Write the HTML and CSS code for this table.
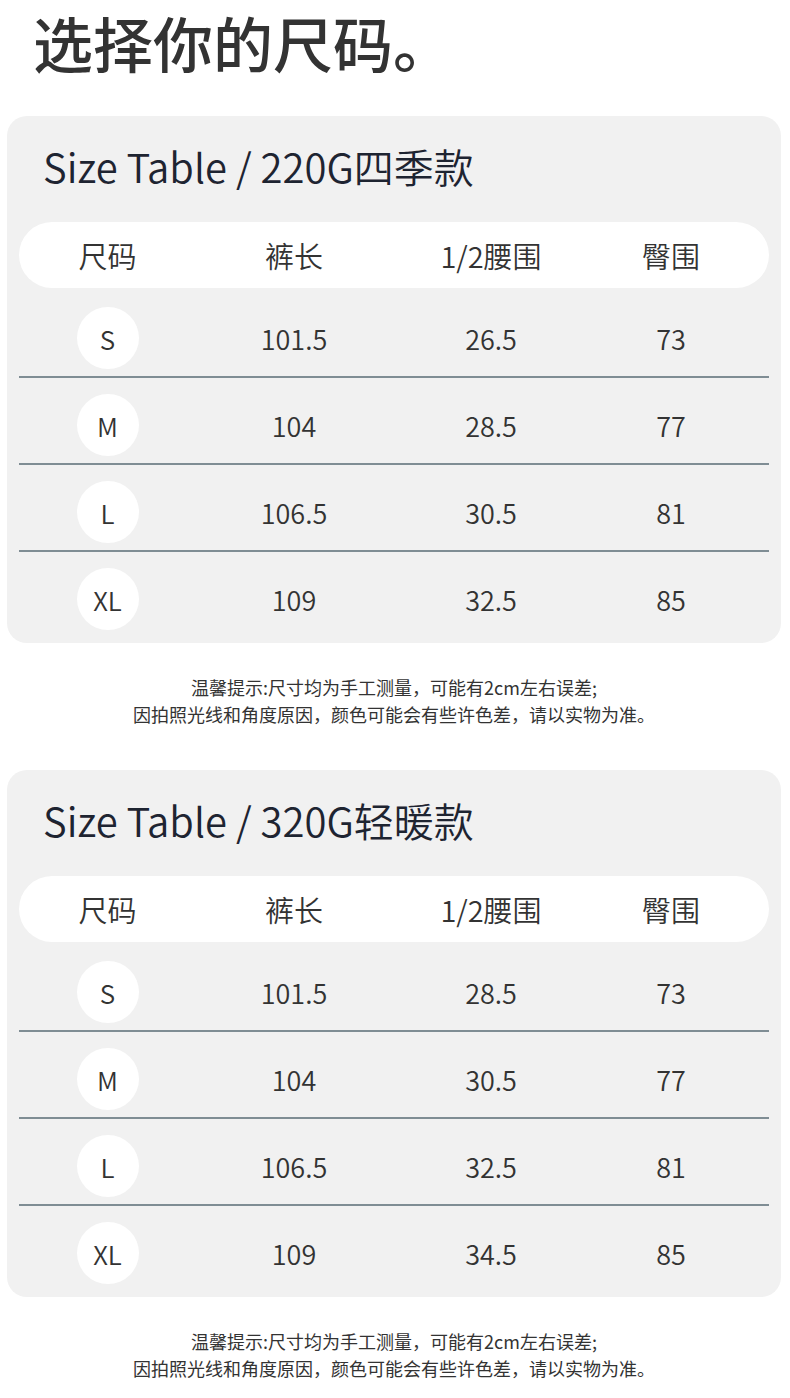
FILE: index.html
```html
<!DOCTYPE html>
<html lang="zh-CN">
<head>
<meta charset="utf-8">
<title>选择你的尺码</title>
<link rel="stylesheet" href="styles.css">
</head>
<body>
<div class="page">
  <h1 class="heading">选择你的尺码。</h1>

  <section class="card">
    <h2 class="card-title">Size Table / 220G四季款</h2>
    <div class="head-row">
      <span>尺码</span><span>裤长</span><span>1/2腰围</span><span>臀围</span>
    </div>
    <div class="row"><span class="size"><i>S</i></span><span>101.5</span><span>26.5</span><span>73</span></div>
    <div class="row"><span class="size"><i>M</i></span><span>104</span><span>28.5</span><span>77</span></div>
    <div class="row"><span class="size"><i>L</i></span><span>106.5</span><span>30.5</span><span>81</span></div>
    <div class="row last"><span class="size"><i>XL</i></span><span>109</span><span>32.5</span><span>85</span></div>
  </section>
  <p class="note">温馨提示:尺寸均为手工测量，可能有2cm左右误差;<br>因拍照光线和角度原因，颜色可能会有些许色差，请以实物为准。</p>

  <section class="card">
    <h2 class="card-title">Size Table / 320G轻暖款</h2>
    <div class="head-row">
      <span>尺码</span><span>裤长</span><span>1/2腰围</span><span>臀围</span>
    </div>
    <div class="row"><span class="size"><i>S</i></span><span>101.5</span><span>28.5</span><span>73</span></div>
    <div class="row"><span class="size"><i>M</i></span><span>104</span><span>30.5</span><span>77</span></div>
    <div class="row"><span class="size"><i>L</i></span><span>106.5</span><span>32.5</span><span>81</span></div>
    <div class="row last"><span class="size"><i>XL</i></span><span>109</span><span>34.5</span><span>85</span></div>
  </section>
  <p class="note">温馨提示:尺寸均为手工测量，可能有2cm左右误差;<br>因拍照光线和角度原因，颜色可能会有些许色差，请以实物为准。</p>
</div>
</body>
</html>
```

FILE: styles.css
```css
* { box-sizing: border-box; }
html, body { margin: 0; padding: 0; background: #ffffff; }
body {
  font-family: "Noto Sans CJK SC", "Noto Sans", sans-serif;
  color: #333333;
}
.page {
  width: 790px;
  padding: 0 9px 0 7px;
}
.heading {
  margin: 0;
  padding: 6px 0 0 26px;
  font-size: 60px;
  line-height: 72px;
  font-weight: 500;
  color: #333333;
  margin-bottom: 38px;
}
.card {
  background: #f1f1f1;
  border-radius: 20px;
  padding: 22px 12px 6px 12px;
}
.card-title {
  margin: 0 0 28px 0;
  padding-left: 24px;
  font-size: 40px;
  line-height: 56px;
  font-weight: 350;
  color: #1e2431;
}
.head-row {
  height: 66px;
  background: #ffffff;
  border-radius: 33px;
  display: grid;
  grid-template-columns: 177px 196px 198px 162px 1fr;
  align-items: center;
  font-size: 29px;
  font-weight: 350;
  color: #333333;
  margin-bottom: 3px;
}
.head-row span, .row span { text-align: center; }
.row {
  height: 87px;
  padding-top: 9px;
  border-bottom: 2px solid #7f8d94;
  display: grid;
  grid-template-columns: 177px 196px 198px 162px 1fr;
  align-items: center;
  font-size: 27px;
  font-weight: 350;
  color: #333333;
}
.row.last { border-bottom: 0; height: 85px; }
.size {
  display: flex;
  justify-content: center;
}
.size i {
  font-style: normal;
  width: 62px;
  height: 62px;
  border-radius: 50%;
  background: #ffffff;
  display: flex;
  align-items: center;
  justify-content: center;
  font-size: 26px;
}
.note {
  margin: 31px 0 42px 0;
  text-align: center;
  font-size: 18px;
  line-height: 27px;
  font-weight: 400;
  color: #333333;
}
```
